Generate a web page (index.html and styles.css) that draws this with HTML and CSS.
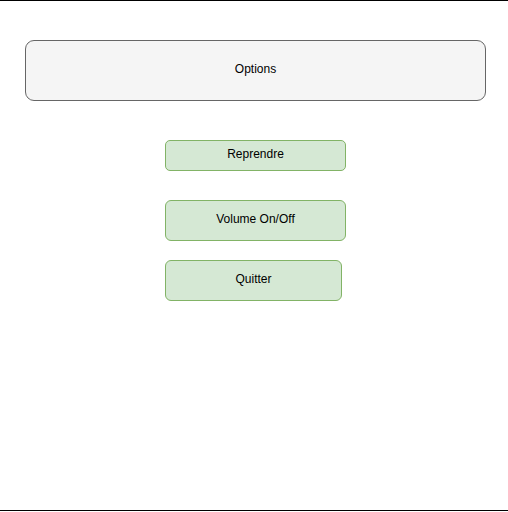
FILE: index.html
```html
<!DOCTYPE html>
<html>
<head>
<meta charset="utf-8">
<link rel="stylesheet" href="styles.css">
</head>
<body>
<div class="page">
  <div class="title">Options</div>
  <div class="menu">
    <div class="btn btn-resume">Reprendre</div>
    <div class="btn btn-volume">Volume On/Off</div>
    <div class="btn btn-quit">Quitter</div>
  </div>
</div>
</body>
</html>
```
FILE: styles.css
```css
html, body {
  margin: 0;
  padding: 0;
  background: #ffffff;
}
.page {
  box-sizing: border-box;
  width: 508px;
  height: 511px;
  border-top: 1px solid #000000;
  border-bottom: 1px solid #000000;
  font-family: "Liberation Sans", Arial, sans-serif;
  font-size: 12px;
  color: #000000;
  display: flex;
  flex-direction: column;
}
.title {
  box-sizing: border-box;
  margin: 39px 0 0 25px;
  width: 461px;
  height: 61px;
  padding-bottom: 4px;
  background: #f5f5f5;
  border: 1px solid #666666;
  border-radius: 9px;
  display: flex;
  align-items: center;
  justify-content: center;
}
.menu {
  display: flex;
  flex-direction: column;
  align-items: flex-start;
  padding-left: 165px;
  margin-top: 39px;
}
.btn {
  box-sizing: border-box;
  padding-bottom: 3px;
  background: #d5e8d4;
  border: 1px solid #82b366;
  display: flex;
  align-items: center;
  justify-content: center;
}
.btn-resume {
  width: 181px;
  height: 31px;
  border-radius: 5px;
}
.btn-volume {
  width: 181px;
  height: 41px;
  border-radius: 6px;
  margin-top: 29px;
}
.btn-quit {
  width: 177px;
  height: 41px;
  border-radius: 6px;
  margin-top: 19px;
}
```
